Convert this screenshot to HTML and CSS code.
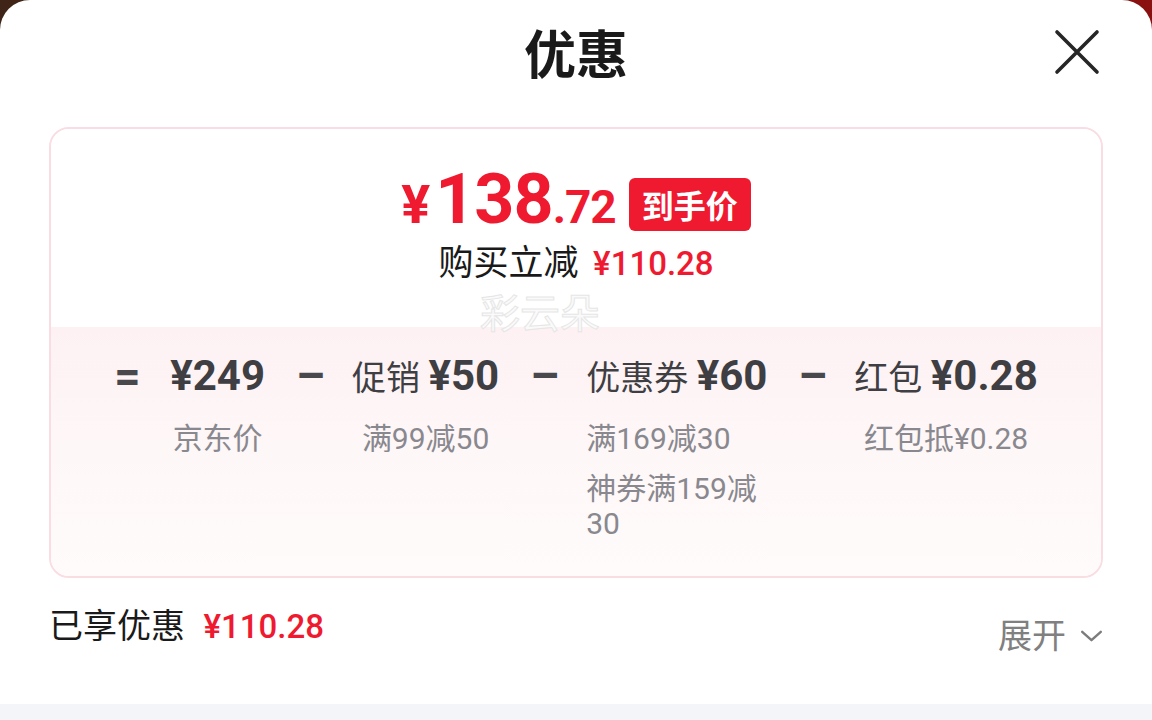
FILE: index.html
```html
<!DOCTYPE html>
<html lang="zh-CN">
<head>
  <meta charset="UTF-8">
  <meta name="viewport" content="width=device-width, initial-scale=1.0">
  <title>优惠</title>
  <link rel="stylesheet" href="styles.css">
</head>
<body>
  <div class="sheet">
    <header class="sheet-header">
      <h1 class="sheet-title">优惠</h1>
      <button class="close-btn" aria-label="关闭">
        <svg viewBox="0 0 48 48" width="48" height="48">
          <path d="M4 4 L44 44 M44 4 L4 44" stroke="#262626" stroke-width="3.6" stroke-linecap="round" fill="none"/>
        </svg>
      </button>
    </header>

    <!-- 到手价 -->
    <section class="price-card">
      <div class="price-top">
        <div class="price-row">
          <span class="final-price"><span class="yen">¥</span>138<span class="decimal">.72</span></span>
          <span class="price-tag">到手价</span>
        </div>
        <div class="price-save">购买立减 <span class="red">¥110.28</span></div>
        <div class="watermark">彩云朵</div>
      </div>

      <!-- 价格明细 -->
      <div class="price-calc">
        <span class="op">=</span>
        <div class="calc-item">
          <div class="calc-head"><b>¥249</b></div>
          <ul class="calc-sub"><li>京东价</li></ul>
        </div>
        <span class="op">–</span>
        <div class="calc-item">
          <div class="calc-head">促销 <b>¥50</b></div>
          <ul class="calc-sub"><li>满99减50</li></ul>
        </div>
        <span class="op">–</span>
        <div class="calc-item">
          <div class="calc-head">优惠券 <b>¥60</b></div>
          <ul class="calc-sub calc-sub-left">
            <li>满169减30</li>
            <li>神券满159减30</li>
          </ul>
        </div>
        <span class="op">–</span>
        <div class="calc-item">
          <div class="calc-head">红包 <b>¥0.28</b></div>
          <ul class="calc-sub"><li>红包抵¥0.28</li></ul>
        </div>
      </div>
    </section>

    <footer class="sheet-footer">
      <div class="saved">已享优惠 <span class="red">¥110.28</span></div>
      <div class="expand">
        展开
        <svg viewBox="0 0 24 14" width="23" height="13">
          <path d="M2 2 L12 11 L22 2" stroke="#7c7c7c" stroke-width="2.6" stroke-linecap="round" stroke-linejoin="round" fill="none"/>
        </svg>
      </div>
    </footer>
  </div>
  <div class="bottom-bar"></div>
</body>
</html>
```

FILE: styles.css
```css
/* General */
body {
  margin: 0;
  font-family: Roboto, "Noto Sans CJK SC", sans-serif;
  background: linear-gradient(90deg, #3f2517 0%, #6b1a14 60%, #8b1010 100%);
}

.sheet {
  box-sizing: border-box;
  min-height: 704px;
  padding: 0 49px;
  background-color: #fff;
  border-radius: 30px 30px 0 0;
}

.bottom-bar {
  height: 16px;
  background-color: #f4f5f9;
}

.red {
  color: #ef1a2f;
}

/* Header */
.sheet-header {
  display: grid;
  grid-template-columns: 1fr auto 1fr;
  align-items: center;
  padding-top: 17px;
  height: 70px;
}

.sheet-title {
  grid-column: 2;
  margin: 0;
  font-family: "Noto Sans CJK SC", sans-serif;
  font-size: 52px;
  line-height: 70px;
  font-weight: 700;
  color: #1a1a1a;
}

.close-btn {
  grid-column: 3;
  justify-self: end;
  margin-right: 2px;
  padding: 0;
  border: none;
  background: none;
  display: flex;
}

/* Price card */
.price-card {
  margin-top: 40px;
  border: 2px solid #f9dde3;
  border-radius: 20px;
  overflow: hidden;
}

.price-top {
  position: relative;
  display: flex;
  flex-direction: column;
  align-items: center;
  padding: 35px 0 43px;
  background-color: #fff;
}

.price-row {
  display: flex;
  align-items: flex-end;
  gap: 13px;
  height: 70px;
}

.final-price {
  margin-bottom: -8px;
  font-size: 70px;
  line-height: 70px;
  font-weight: 700;
  color: #ef1a2f;
  letter-spacing: -1px;
}

.final-price .yen {
  font-size: 54px;
  margin-right: 6px;
}

.final-price .decimal {
  font-size: 46px;
}

.price-tag {
  height: 53px;
  line-height: 53px;
  margin-bottom: 3px;
  padding: 0 13px;
  border-radius: 6px;
  background-color: #ef1a2f;
  color: #fff;
  font-family: "Noto Sans CJK SC", sans-serif;
  font-size: 32px;
  font-weight: 700;
}

.price-save {
  margin-top: 10px;
  font-size: 35px;
  line-height: 40px;
  color: #1a1a1a;
}

.price-save .red {
  margin-left: 6px;
  font-size: 33px;
  font-weight: 500;
}

.watermark {
  position: absolute;
  left: 429px;
  bottom: -4px;
  font-family: "Noto Sans CJK SC", sans-serif;
  font-size: 40px;
  line-height: 40px;
  color: #fafafa;
  -webkit-text-stroke: 1px #e6e6e6;
}

/* Breakdown */
.price-calc {
  display: flex;
  justify-content: center;
  align-items: flex-start;
  gap: 31px;
  padding: 25px 0 35px;
  background: linear-gradient(180deg, #fdf1f3 0%, #fef7f8 50%, #fffbfb 100%);
}

.op {
  width: 25px;
  text-align: center;
  font-size: 46px;
  line-height: 48px;
  font-weight: 700;
  color: #48484d;
}

.calc-item {
  display: flex;
  flex-direction: column;
  align-items: center;
  width: min-content;
}

.calc-head {
  white-space: nowrap;
  font-size: 34px;
  line-height: 48px;
  color: #3e3e43;
}

.calc-head b {
  margin-left: 3px;
  font-size: 42px;
  font-weight: 700;
}

.calc-head b:first-child {
  margin-left: 0;
}

.calc-sub {
  align-self: stretch;
  margin: 19px 0 0;
  padding: 0;
  list-style: none;
  text-align: center;
  font-size: 30px;
  line-height: 35px;
  color: #88888e;
}

.calc-sub li + li {
  margin-top: 15px;
}

.calc-sub-left {
  text-align: left;
}

/* Footer */
.sheet-footer {
  display: flex;
  justify-content: space-between;
  align-items: flex-start;
  margin-top: 28px;
}

.saved {
  font-size: 34px;
  line-height: 40px;
  color: #1a1a1a;
}

.saved .red {
  font-size: 33px;
  font-weight: 500;
  margin-left: 10px;
}

.expand {
  display: flex;
  align-items: center;
  gap: 14px;
  margin-top: 10px;
  font-size: 34px;
  line-height: 40px;
  color: #808080;
}
```
